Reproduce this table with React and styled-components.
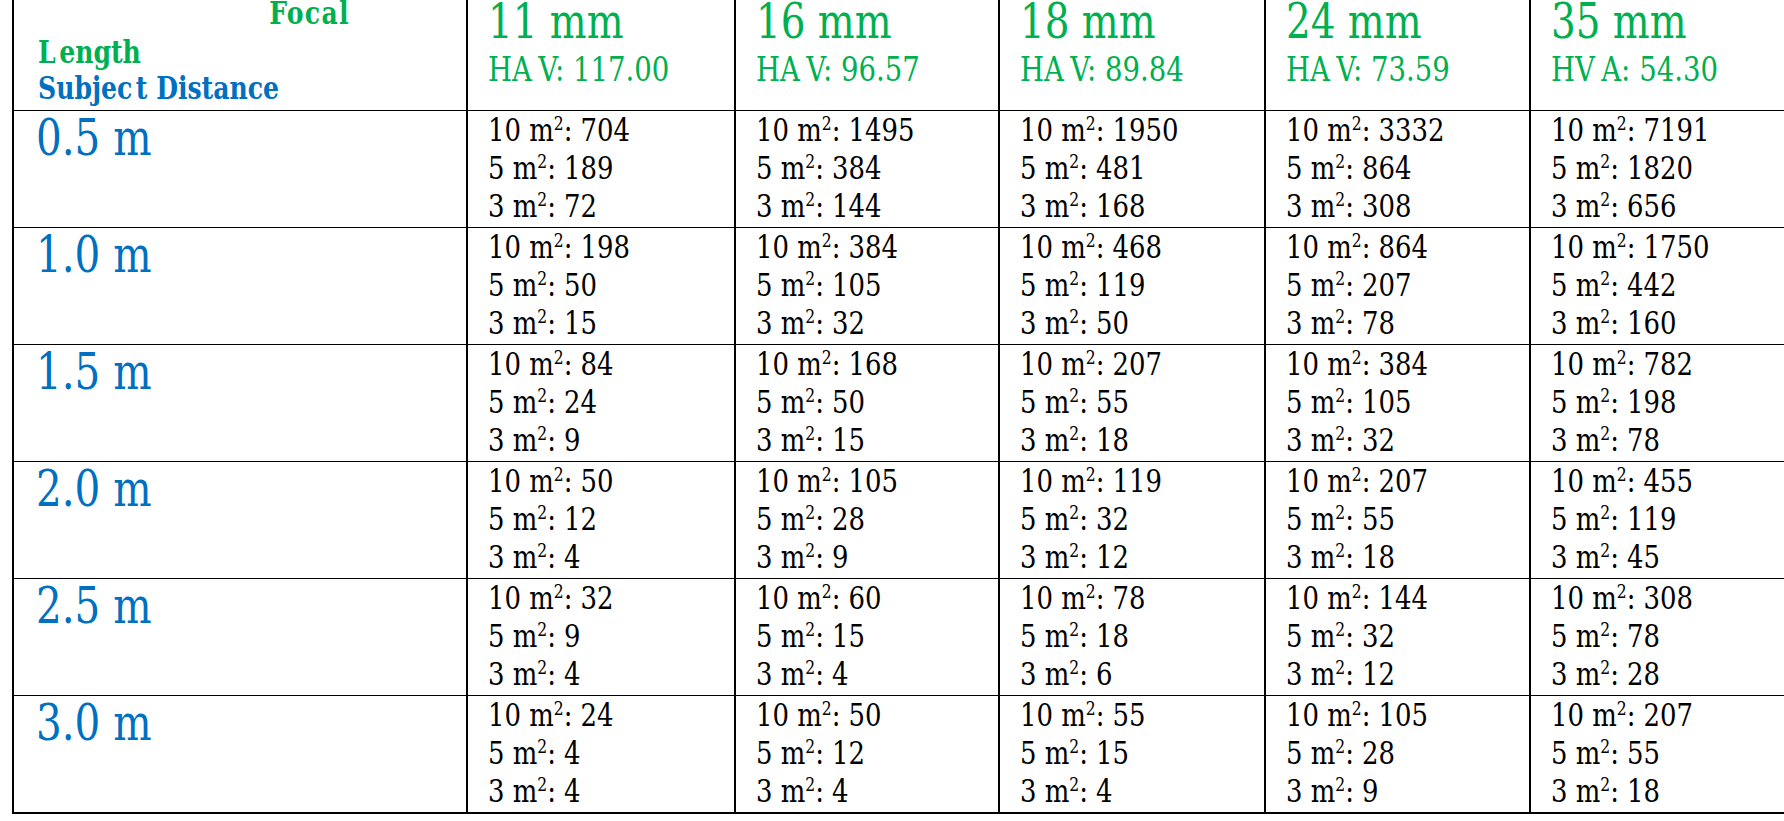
import React from "react";
import styled, { createGlobalStyle, css } from "styled-components";

const GlobalStyle = createGlobalStyle`
  html, body {
    margin: 0;
    padding: 0;
    background: #ffffff;
    overflow: hidden;
  }
  body {
    font-family: "DejaVu Serif Condensed", "DejaVu Serif", serif;
    color: #000000;
  }
`;

const GREEN = "#00B050";
const BLUE = "#0070C0";

/* the reference uses a condensed serif face; emulate its narrower advance */
const condensed = css`
  transform: scaleX(0.9);
  transform-origin: ${(p) => (p.$right ? "right" : "left")} center;
`;

const Sheet = styled.div`
  display: grid;
  grid-template-columns: 454px 268px 264px 266px 265px 266px;
  grid-template-rows: 111px repeat(5, 117px) 118px;
  margin-left: 12px;
  width: max-content;
`;

const Cell = styled.div`
  box-sizing: border-box;
  border-left: 2px solid #000;
  border-bottom: ${(p) => (p.$last ? 2 : 1)}px solid #000;
  padding-left: ${(p) => (p.$first ? 22 : 20)}px;
  white-space: nowrap;
`;

const CornerLabel = styled.div`
  ${condensed};
  font-weight: bold;
  font-size: 31px;
  line-height: ${(p) => (p.$right ? 27 : 36)}px;
  color: ${(p) => p.$color};
  text-align: ${(p) => (p.$right ? "right" : "left")};
  width: ${(p) => (p.$right ? "314px" : "auto")};
  margin-top: ${(p) => p.$top || 0}px;
  margin-left: ${(p) => (p.$right ? 0 : 2)}px;
  letter-spacing: ${(p) => (p.$right ? 1.5 : 0)}px;
`;

const Gap = styled.span`
  margin-right: ${(p) => p.$w}px;
`;

const FocalTitle = styled.div`
  ${condensed};
  font-size: 48px;
  line-height: 42px;
  color: ${GREEN};
`;

const AngleLine = styled.div`
  ${condensed};
  font-size: 34px;
  line-height: 54px;
  color: ${GREEN};
`;

const Distance = styled.div`
  ${condensed};
  font-size: 50px;
  line-height: 54px;
  color: ${BLUE};
`;

const CountLine = styled.div`
  ${condensed};
  font-size: 32px;
  line-height: 38px;
`;

const Sup = styled.sup`
  font-size: 0.6em;
  line-height: 0;
  vertical-align: 0.58em;
`;

const lenses = [
  { mm: "11 mm", label: "HAV", value: "117.00" },
  { mm: "16 mm", label: "HAV", value: "96.57" },
  { mm: "18 mm", label: "HAV", value: "89.84" },
  { mm: "24 mm", label: "HAV", value: "73.59" },
  { mm: "35 mm", label: "HVA", value: "54.30" },
];

const rows = [
  { d: "0.5 m", v: [[704, 189, 72], [1495, 384, 144], [1950, 481, 168], [3332, 864, 308], [7191, 1820, 656]] },
  { d: "1.0 m", v: [[198, 50, 15], [384, 105, 32], [468, 119, 50], [864, 207, 78], [1750, 442, 160]] },
  { d: "1.5 m", v: [[84, 24, 9], [168, 50, 15], [207, 55, 18], [384, 105, 32], [782, 198, 78]] },
  { d: "2.0 m", v: [[50, 12, 4], [105, 28, 9], [119, 32, 12], [207, 55, 18], [455, 119, 45]] },
  { d: "2.5 m", v: [[32, 9, 4], [60, 15, 4], [78, 18, 6], [144, 32, 12], [308, 78, 28]] },
  { d: "3.0 m", v: [[24, 4, 4], [50, 12, 4], [55, 15, 4], [105, 28, 9], [207, 55, 18]] },
];

const areas = [10, 5, 3];

function AngleText({ label, value }) {
  return (
    <AngleLine>
      {label.slice(0, 2)}
      <Gap $w={7} />
      {label.slice(2)}: {value}
    </AngleLine>
  );
}

export default function App() {
  return (
    <>
      <GlobalStyle />
      <Sheet>
        <Cell $first>
          <CornerLabel $color={GREEN} $right>
            Focal
          </CornerLabel>
          <CornerLabel $color={GREEN} $top={7}>
            L<Gap $w={4} />ength
          </CornerLabel>
          <CornerLabel $color={BLUE}>
            Subjec<Gap $w={4} />t Distance
          </CornerLabel>
        </Cell>
        {lenses.map((l) => (
          <Cell key={l.mm}>
            <FocalTitle>{l.mm}</FocalTitle>
            <AngleText label={l.label} value={l.value} />
          </Cell>
        ))}
        {rows.map((r, ri) => {
          const last = ri === rows.length - 1;
          return (
            <React.Fragment key={r.d}>
              <Cell $first $last={last}>
                <Distance>{r.d}</Distance>
              </Cell>
              {r.v.map((vals, ci) => (
                <Cell key={ci} $last={last}>
                  {vals.map((n, k) => (
                    <CountLine key={k}>
                      {areas[k]} m<Sup>2</Sup>: {n}
                    </CountLine>
                  ))}
                </Cell>
              ))}
            </React.Fragment>
          );
        })}
      </Sheet>
    </>
  );
}
